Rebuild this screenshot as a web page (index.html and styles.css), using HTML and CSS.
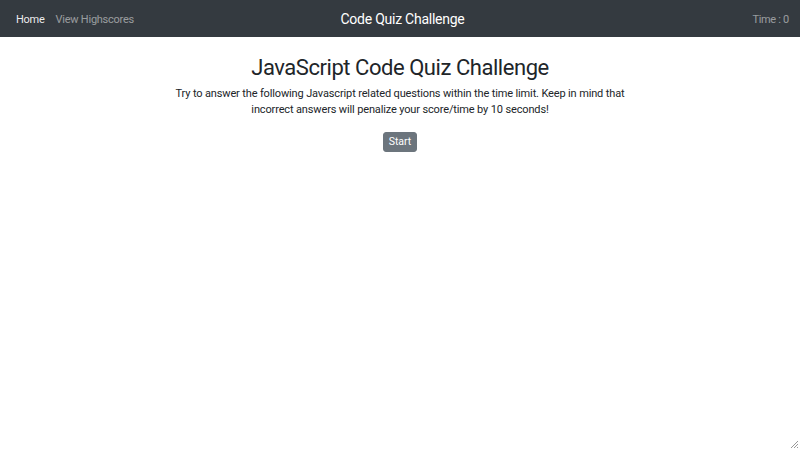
FILE: index.html
```html
<!DOCTYPE html>
<html>
<head>
<meta charset="utf-8">
<link rel="stylesheet" href="styles.css">
</head>
<body>
<nav class="navbar">
  <div class="nav-left">
    <a class="nav-link active" href="#">Home</a>
    <a class="nav-link" href="#">View Highscores</a>
  </div>
  <div class="brand">Code Quiz Challenge</div>
  <div class="nav-right">Time : 0</div>
</nav>
<main class="intro">
  <h1 class="title">JavaScript Code Quiz Challenge</h1>
  <p class="lead">Try to answer the following Javascript related questions within the time limit. Keep in mind that incorrect answers will penalize your score/time by 10 seconds!</p>
  <button class="btn">Start</button>
</main>
<div class="grip">
  <svg width="10" height="10" viewBox="0 0 10 10"><path d="M9 2L2 9M9 5L5 9M9 8L8 9" stroke="#999" stroke-width="1" fill="none"/></svg>
</div>
</body>
</html>
```
FILE: styles.css
```css
html, body {
  margin: 0;
  padding: 0;
  height: 100%;
}
body {
  font-family: Roboto, "Open Sans", sans-serif;
  color: #212529;
  background: #fff;
  position: relative;
  overflow: hidden;
}
.navbar {
  height: 37px;
  background: #343a40;
  display: grid;
  grid-template-columns: 1fr auto 1fr;
  align-items: center;
  padding: 1px 11px 0 16px;
  box-sizing: border-box;
}
.nav-left {
  display: flex;
  gap: 11px;
}
.nav-link {
  color: rgba(255,255,255,.5);
  text-decoration: none;
  font-size: 11px;
  letter-spacing: -0.25px;
}
.nav-link.active {
  color: rgba(255,255,255,.92);
}
.brand {
  color: #fff;
  font-size: 14px;
  letter-spacing: -0.25px;
}
.nav-right {
  justify-self: end;
  color: rgba(255,255,255,.5);
  font-size: 11px;
  letter-spacing: -0.3px;
}
.intro {
  display: flex;
  flex-direction: column;
  align-items: center;
  text-align: center;
  padding-top: 18px;
}
.title {
  margin: 0;
  font-weight: 400;
  font-size: 22px;
  letter-spacing: -0.45px;
  line-height: 26px;
}
.lead {
  margin: 5px 0 0;
  width: 470px;
  font-size: 11px;
  letter-spacing: -0.14px;
  line-height: 16px;
}
.btn {
  margin-top: 14px;
  background: #6c757d;
  color: #fff;
  border: 1px solid #6c757d;
  border-radius: 3px;
  font-family: inherit;
  font-size: 10.5px;
  padding: 3px 5px;
  line-height: 12px;
}
.grip {
  position: absolute;
  right: 1px;
  bottom: 1px;
  width: 10px;
  height: 10px;
}
.grip svg { display: block; }
```
